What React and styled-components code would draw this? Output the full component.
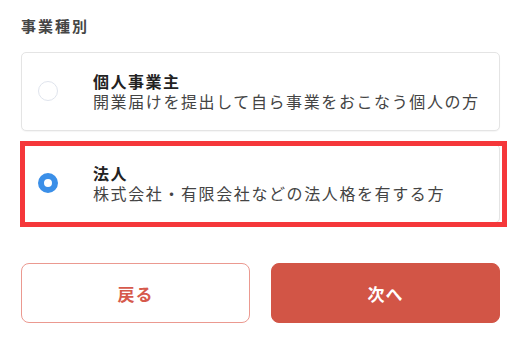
import React, { useState } from 'react';
import styled, { createGlobalStyle } from 'styled-components';

const GlobalStyle = createGlobalStyle`
  html, body {
    margin: 0;
    padding: 0;
    background: #ffffff;
  }
  body {
    font-family: "Noto Sans CJK JP", "Noto Sans", sans-serif;
    color: #333333;
  }
`;

const Page = styled.div`
  width: 520px;
  box-sizing: border-box;
  padding: 16px 21px 0 21px;
`;

const Label = styled.div`
  font-size: 15px;
  line-height: 20px;
  font-weight: 700;
  letter-spacing: 2px;
  color: #454545;
  margin-bottom: 16px;
`;

const OptionList = styled.div`
  display: flex;
  flex-direction: column;
  gap: 13px;
`;

const Card = styled.label`
  position: relative;
  display: flex;
  align-items: center;
  box-sizing: border-box;
  width: 479px;
  padding: 18px 16px 19px 16px;
  border: 1px solid #e4e4e4;
  border-radius: 5px;
  background: #ffffff;
  box-shadow: 0 1px 1px rgba(0, 0, 0, 0.04);
  cursor: pointer;
`;

const Radio = styled.span`
  flex: none;
  box-sizing: border-box;
  width: 20px;
  height: 20px;
  border-radius: 50%;
  margin-right: 35px;
  border: ${({ $checked }) => ($checked ? '6.5px solid #3b8fe8' : '1.5px solid #dfe4ed')};
  background: #ffffff;
`;

const Texts = styled.div`
  display: flex;
  flex-direction: column;
`;

const Title = styled.div`
  font-size: 16px;
  line-height: 20px;
  font-weight: 700;
  letter-spacing: 1.5px;
  color: #222222;
`;

const Desc = styled.div`
  font-size: 16px;
  line-height: 20px;
  letter-spacing: 1.6px;
  color: #444444;
`;

const Highlight = styled.span`
  position: absolute;
  top: -4px;
  left: -2px;
  right: -8px;
  bottom: -5px;
  border: 5px solid #f5373a;
  pointer-events: none;
`;

const Actions = styled.div`
  display: grid;
  grid-template-columns: 229px 229px;
  gap: 21px;
  margin-top: 40px;
`;

const Button = styled.button`
  height: 60px;
  border-radius: 8px;
  font-family: "Noto Sans CJK JP", sans-serif;
  font-size: 17px;
  font-weight: 700;
  letter-spacing: 1px;
  cursor: pointer;
  border: 1.5px solid ${({ $primary }) => ($primary ? '#d25546' : '#eb9990')};
  background: ${({ $primary }) => ($primary ? '#d25546' : '#ffffff')};
  color: ${({ $primary }) => ($primary ? '#ffffff' : '#d65a4c')};
`;

const options = [
  { id: 'individual', title: '個人事業主', desc: '開業届けを提出して自ら事業をおこなう個人の方' },
  { id: 'corporate', title: '法人', desc: '株式会社・有限会社などの法人格を有する方' },
];

export default function App() {
  const [selected, setSelected] = useState('corporate');

  return (
    <Page>
      <GlobalStyle />
      <Label>事業種別</Label>
      <OptionList>
        {options.map((o) => (
          <Card key={o.id} onClick={() => setSelected(o.id)}>
            <Radio $checked={selected === o.id} />
            <Texts>
              <Title>{o.title}</Title>
              <Desc>{o.desc}</Desc>
            </Texts>
            {o.id === 'corporate' && <Highlight />}
          </Card>
        ))}
      </OptionList>
      <Actions>
        <Button>戻る</Button>
        <Button $primary>次へ</Button>
      </Actions>
    </Page>
  );
}
